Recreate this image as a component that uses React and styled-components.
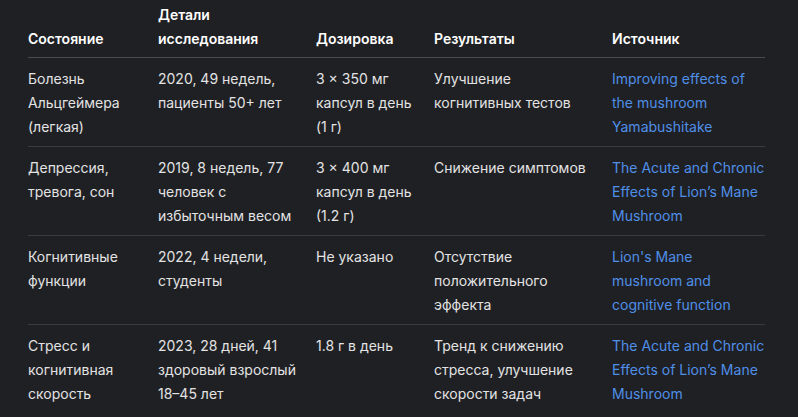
import React from 'react';
import styled, { createGlobalStyle } from 'styled-components';

const GlobalStyle = createGlobalStyle`
  html, body {
    margin: 0;
    padding: 0;
    background: #1f2023;
  }
  body {
    font-family: Inter, "Noto Sans", sans-serif;
  }
`;

const Page = styled.div`
  padding: 0 0 0 28px;
  min-height: 417px;
  background: #1f2023;
`;

const Table = styled.table`
  width: 737px;
  border-collapse: collapse;
  table-layout: fixed;
  font-size: 14px;
  line-height: 24px;
  color: #e3e3e3;
`;

const HeadCell = styled.th`
  text-align: left;
  vertical-align: bottom;
  font-weight: 600;
  color: #ffffff;
  padding: 3px 16px 6px 0;
  border-bottom: 1px solid #4a4b4f;

  &:last-child {
    padding-right: 0;
  }
`;

const Row = styled.tr`
  border-bottom: ${(p) => (p.$last ? 'none' : '1px solid #3a3b3f')};
`;

const Cell = styled.td`
  vertical-align: top;
  padding: 9px 16px 7px 0;

  &:last-child {
    padding-right: 0;
  }
`;

const SourceLink = styled.a`
  color: #4f8fe8;
  text-decoration: none;
`;

const columns = [
  { title: 'Состояние', width: 130 },
  { title: 'Детали исследования', width: 158 },
  { title: 'Дозировка', width: 118 },
  { title: 'Результаты', width: 178 },
  { title: 'Источник', width: 153 },
];

const rows = [
  {
    condition: 'Болезнь Альцгеймера (легкая)',
    details: '2020, 49 недель, пациенты 50+ лет',
    dose: '3 × 350 мг капсул в день (1 г)',
    result: 'Улучшение когнитивных тестов',
    source: 'Improving effects of the mushroom Yamabushitake',
  },
  {
    condition: 'Депрессия, тревога, сон',
    details: '2019, 8 недель, 77 человек с избыточным весом',
    dose: '3 × 400 мг капсул в день (1.2 г)',
    result: 'Снижение симптомов',
    source: 'The Acute and Chronic Effects of Lion’s Mane Mushroom',
  },
  {
    condition: 'Когнитивные функции',
    details: '2022, 4 недели, студенты',
    dose: 'Не указано',
    result: 'Отсутствие положительного эффекта',
    source: "Lion's Mane mushroom and cognitive function",
  },
  {
    condition: 'Стресс и когнитивная скорость',
    details: '2023, 28 дней, 41 здоровый взрослый 18–45 лет',
    dose: '1.8 г в день',
    result: 'Тренд к снижению стресса, улучшение скорости задач',
    source: 'The Acute and Chronic Effects of Lion’s Mane Mushroom',
  },
];

function App() {
  return (
    <Page>
      <GlobalStyle />
      <Table>
        <colgroup>
          {columns.map((c) => (
            <col key={c.title} style={{ width: c.width }} />
          ))}
        </colgroup>
        <thead>
          <tr>
            {columns.map((c) => (
              <HeadCell key={c.title}>{c.title}</HeadCell>
            ))}
          </tr>
        </thead>
        <tbody>
          {rows.map((r, i) => (
            <Row key={i} $last={i === rows.length - 1}>
              <Cell>{r.condition}</Cell>
              <Cell>{r.details}</Cell>
              <Cell>{r.dose}</Cell>
              <Cell>{r.result}</Cell>
              <Cell>
                <SourceLink href="#">{r.source}</SourceLink>
              </Cell>
            </Row>
          ))}
        </tbody>
      </Table>
    </Page>
  );
}

export default App;
